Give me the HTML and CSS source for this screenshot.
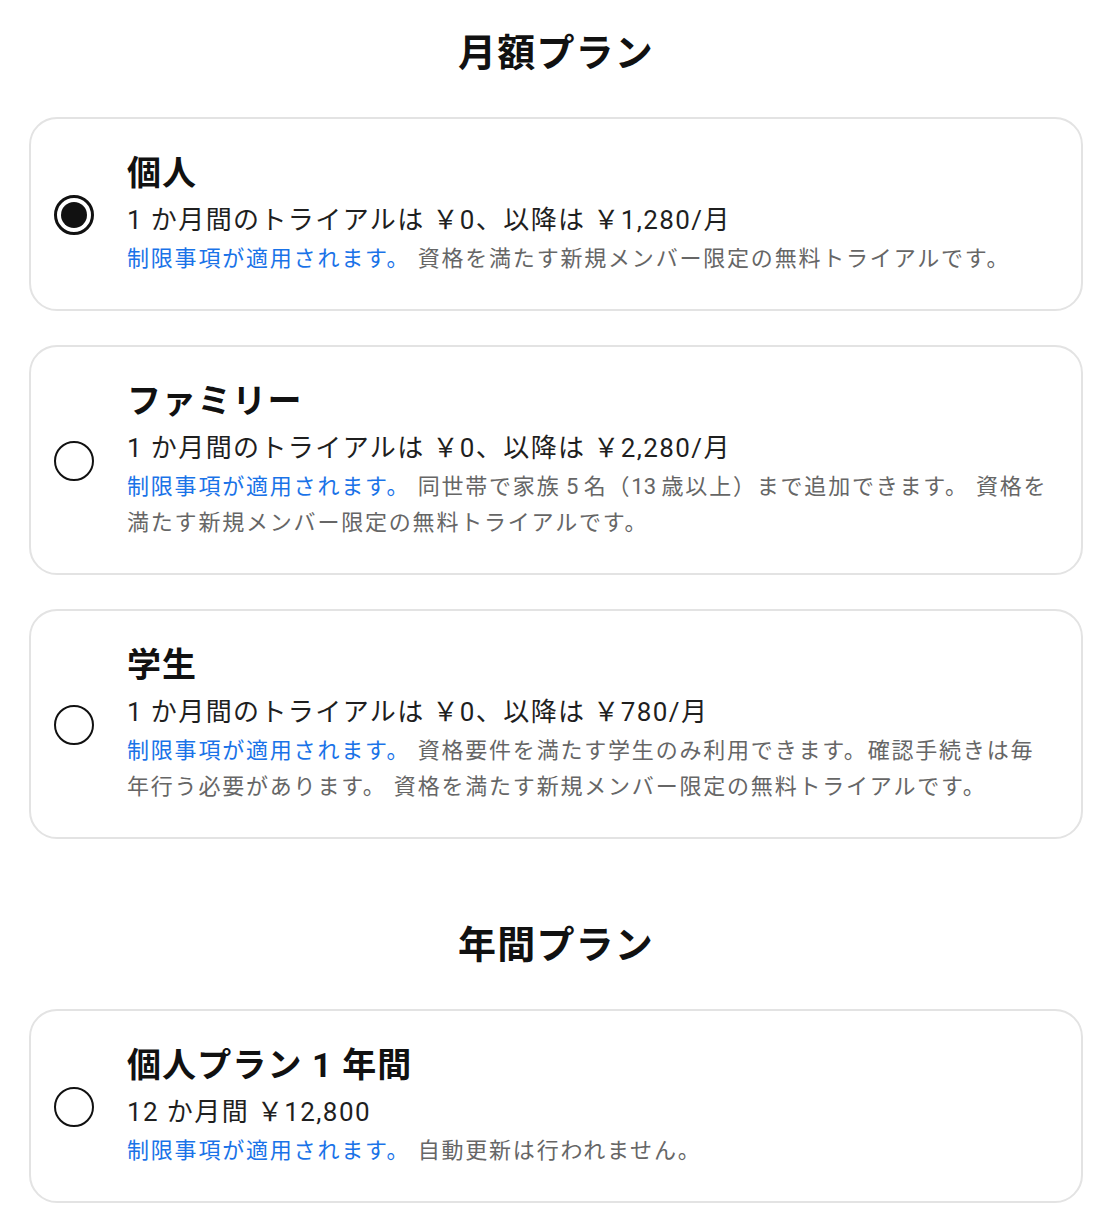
FILE: index.html
```html
<!DOCTYPE html>
<html lang="ja">
<head>
<meta charset="utf-8">
<title>プラン</title>
<link rel="stylesheet" href="styles.css">
</head>
<body>
<main class="page">
  <h2 class="section-title">月額プラン</h2>
  <div class="plans">
    <label class="card">
      <span class="radio selected"><span class="dot"></span></span>
      <div class="info">
        <div class="title">個人</div>
        <div class="price">1 か月間のトライアルは ￥0、以降は ￥1,280/月</div>
        <div class="desc"><span class="link">制限事項が適用されます。</span> 資格を満たす新規メンバー限定の無料トライアルです。</div>
      </div>
    </label>
    <label class="card">
      <span class="radio"></span>
      <div class="info">
        <div class="title">ファミリー</div>
        <div class="price">1 か月間のトライアルは ￥0、以降は ￥2,280/月</div>
        <div class="desc"><span class="link">制限事項が適用されます。</span> 同世帯で家族<span class="n"> 5 </span>名（<span class="n">13 </span>歳以上）まで追加できます。 資格を満たす新規メンバー限定の無料トライアルです。</div>
      </div>
    </label>
    <label class="card">
      <span class="radio"></span>
      <div class="info">
        <div class="title">学生</div>
        <div class="price">1 か月間のトライアルは ￥0、以降は ￥780/月</div>
        <div class="desc"><span class="link">制限事項が適用されます。</span> 資格要件を満たす学生のみ利用できます。確認手続きは毎年行う必要があります。 資格を満たす新規メンバー限定の無料トライアルです。</div>
      </div>
    </label>
  </div>
  <h2 class="section-title annual">年間プラン</h2>
  <div class="plans">
    <label class="card">
      <span class="radio"></span>
      <div class="info">
        <div class="title">個人プラン 1 年間</div>
        <div class="price">12 か月間 ￥12,800</div>
        <div class="desc"><span class="link">制限事項が適用されます。</span> 自動更新は行われません。</div>
      </div>
    </label>
  </div>
</main>
</body>
</html>
```

FILE: styles.css
```css
* { box-sizing: border-box; }
html, body { margin: 0; padding: 0; background: #ffffff; }
body {
  font-family: Roboto, "Noto Sans CJK JP", sans-serif;
  color: #1f1f1f;
}
.page {
  padding: 28px 32px 20px 29px;
}
.section-title {
  margin: 0 0 39px;
  text-align: center;
  font-size: 38px;
  line-height: 50px;
  font-weight: 700;
  letter-spacing: 1.2px;
  color: #111111;
}
.section-title.annual {
  margin-top: 81px;
}
.plans {
  display: flex;
  flex-direction: column;
  gap: 34px;
}
.card {
  display: flex;
  align-items: center;
  gap: 33px;
  border: 2px solid #e3e3e3;
  border-radius: 28px;
  padding: 34px 32px 32px 23px;
  background: #ffffff;
}
.radio {
  flex: 0 0 40px;
  width: 40px;
  height: 40px;
  border: 2px solid #111111;
  border-radius: 50%;
  display: flex;
  align-items: center;
  justify-content: center;
}
.radio.selected {
  border-width: 3px;
}
.radio .dot {
  width: 26px;
  height: 26px;
  border-radius: 50%;
  background: #111111;
}
.info {
  flex: 1 1 auto;
  min-width: 0;
}
.title {
  font-size: 34px;
  line-height: 40px;
  font-weight: 700;
  letter-spacing: 1.1px;
  color: #111111;
}
.price {
  margin-top: 9px;
  font-size: 26px;
  line-height: 36px;
  letter-spacing: 1.4px;
  color: #1f1f1f;
}
.desc {
  margin-top: 3px;
  font-size: 22px;
  line-height: 36px;
  letter-spacing: 1.8px;
  color: #666666;
}
.desc .n {
  letter-spacing: 0;
}
.link {
  color: #1a73e8;
}
```
